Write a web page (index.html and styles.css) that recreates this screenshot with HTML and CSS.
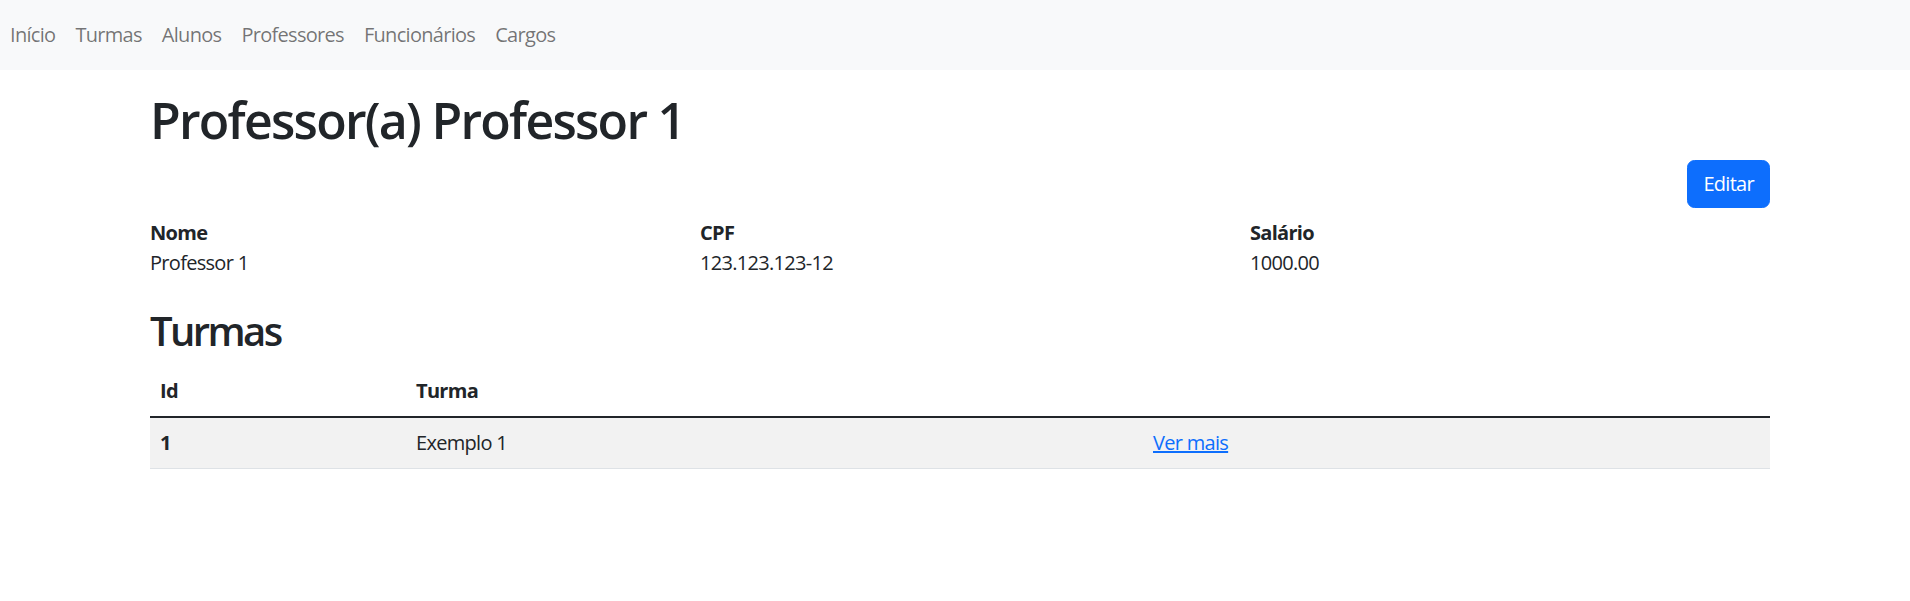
FILE: index.html
```html
<!DOCTYPE html>
<html lang="pt-BR">
<head>
<meta charset="utf-8">
<title>Professor(a) Professor 1</title>
<link rel="stylesheet" href="styles.css">
</head>
<body>
<nav class="navbar">
  <ul class="nav-list">
    <li><a class="nav-link" href="#">Início</a></li>
    <li><a class="nav-link" href="#">Turmas</a></li>
    <li><a class="nav-link" href="#">Alunos</a></li>
    <li><a class="nav-link" href="#">Professores</a></li>
    <li><a class="nav-link" href="#">Funcionários</a></li>
    <li><a class="nav-link" href="#">Cargos</a></li>
  </ul>
</nav>
<main class="container">
  <h1 class="title">Professor(a) Professor 1</h1>
  <div class="actions">
    <a class="btn" href="#">Editar</a>
  </div>
  <div class="info-row">
    <div class="info-col">
      <div class="label">Nome</div>
      <p class="value">Professor 1</p>
    </div>
    <div class="info-col">
      <div class="label">CPF</div>
      <p class="value">123.123.123-12</p>
    </div>
    <div class="info-col">
      <div class="label">Salário</div>
      <p class="value">1000.00</p>
    </div>
  </div>
  <h2 class="subtitle">Turmas</h2>
  <table class="table">
    <thead>
      <tr>
        <th class="col-id">Id</th>
        <th class="col-name">Turma</th>
        <th class="col-link"></th>
      </tr>
    </thead>
    <tbody>
      <tr>
        <th class="col-id">1</th>
        <td class="col-name">Exemplo 1</td>
        <td class="col-link"><a class="link" href="#">Ver mais</a></td>
      </tr>
    </tbody>
  </table>
</main>
</body>
</html>
```

FILE: styles.css
```css
* { box-sizing: border-box; }

html, body {
  margin: 0;
  padding: 0;
  background: #fff;
}

body {
  font-family: "Open Sans", "Noto Sans", sans-serif;
  font-size: 20px;
  line-height: 30px;
  letter-spacing: -0.035em;
  color: #212529;
}

.navbar {
  background: #f8f9fa;
  height: 70px;
  padding: 10px 0;
}

.nav-list {
  list-style: none;
  margin: 0;
  padding: 0;
  display: flex;
}

.nav-link {
  display: block;
  padding: 10px;
  color: rgba(0, 0, 0, 0.55);
  text-decoration: none;
}

.container {
  width: 1620px;
  margin-left: 150px;
  padding-top: 20px;
}

.title {
  margin: 0 0 10px;
  font-size: 50px;
  line-height: 60px;
  font-weight: 600;
  letter-spacing: -0.035em;
}

.actions {
  display: flex;
  justify-content: flex-end;
}

.btn {
  display: inline-block;
  padding: 8px 15px;
  line-height: 30px;
  border: 1px solid #0d6efd;
  border-radius: 7.5px;
  background: #0d6efd;
  color: #fff;
  text-decoration: none;
}

.info-row {
  display: grid;
  grid-template-columns: repeat(3, 1fr);
  column-gap: 30px;
  margin-top: 10px;
}

.label {
  font-weight: 700;
}

.value {
  margin: 0 0 20px;
}

.subtitle {
  margin: 9px 0 11px;
  font-size: 40px;
  line-height: 48px;
  font-weight: 600;
  letter-spacing: -0.065em;
}

.table {
  width: 100%;
  border-collapse: collapse;
}

.table th,
.table td {
  padding: 10px;
  text-align: left;
  vertical-align: top;
}

.table thead th {
  font-weight: 700;
  border-bottom: 2px solid #212529;
}

.table tbody tr {
  background: #f2f2f2;
}

.table tbody th,
.table tbody td {
  border-bottom: 1px solid #dee2e6;
}

.table tbody th {
  font-weight: 700;
}

.col-id { width: 256px; }
.col-name { width: 737px; }

.link {
  color: #0d6efd;
  text-decoration: underline;
}
```
